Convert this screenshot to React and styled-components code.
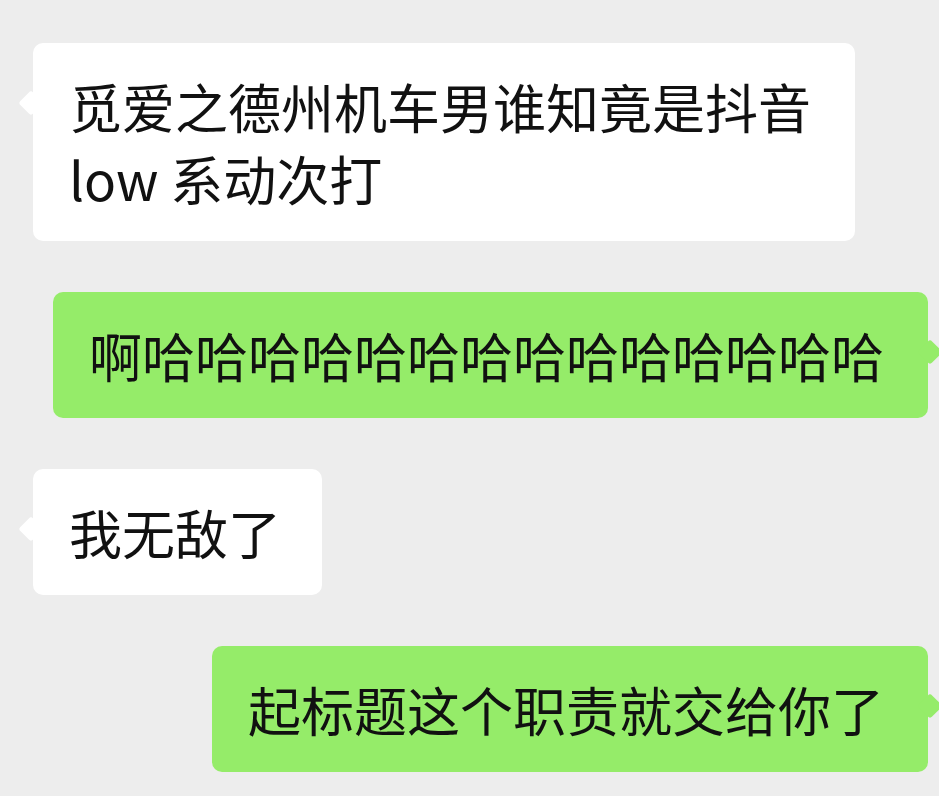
import React from "react";
import styled, { createGlobalStyle } from "styled-components";

const GlobalStyle = createGlobalStyle`
  html, body {
    margin: 0;
    padding: 0;
    background: #ededed;
  }
  body {
    font-family: "Noto Sans CJK SC", "Noto Sans", sans-serif;
    overflow: hidden;
  }
`;

const messages = [
  { id: 1, mine: false, text: "觅爱之德州机车男谁知竟是抖音low 系动次打" },
  { id: 2, mine: true, text: "啊哈哈哈哈哈哈哈哈哈哈哈哈哈哈" },
  { id: 3, mine: false, text: "我无敌了" },
  { id: 4, mine: true, text: "起标题这个职责就交给你了" },
];

export default function App() {
  return (
    <>
      <GlobalStyle />
      <Chat>
        {messages.map((m) => (
          <Row key={m.id} $mine={m.mine}>
            <Bubble $mine={m.mine}>{m.text}</Bubble>
          </Row>
        ))}
      </Chat>
    </>
  );
}

const Chat = styled.div`
  width: 939px;
  height: 796px;
  box-sizing: border-box;
  padding: 43px 11px 0 33px;
  display: flex;
  flex-direction: column;
  gap: 51px;
  background: #ededed;
`;

const Row = styled.div`
  display: flex;
  justify-content: ${(p) => (p.$mine ? "flex-end" : "flex-start")};
`;

const Bubble = styled.div`
  position: relative;
  max-width: ${(p) => (p.$mine ? "880px" : "822px")};
  box-sizing: border-box;
  padding: 27px ${(p) => (p.$mine ? "44px" : "41px")} 27px 36px;
  border-radius: 10px;
  background: ${(p) => (p.$mine ? "#95ec69" : "#ffffff")};
  color: #111111;
  font-size: 53px;
  line-height: 72px;

  &::before {
    content: "";
    position: absolute;
    top: 51px;
    ${(p) => (p.$mine ? "right: -11px;" : "left: -11px;")}
    width: 18px;
    height: 18px;
    border-radius: 3px;
    background: inherit;
    transform: rotate(45deg);
  }
`;
